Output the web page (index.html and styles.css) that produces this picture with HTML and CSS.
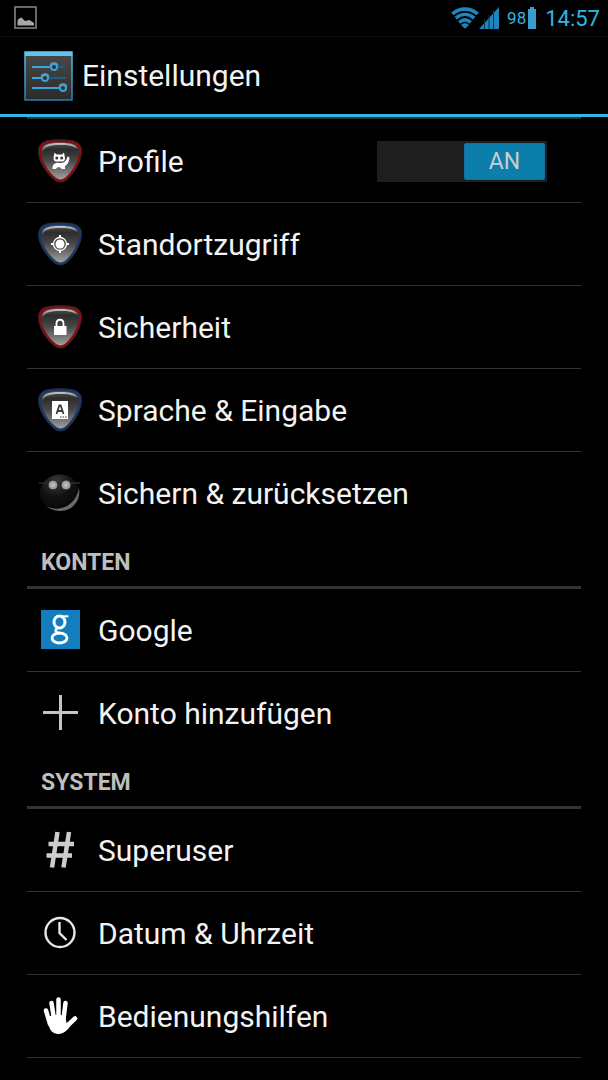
FILE: index.html
```html
<!DOCTYPE html>
<html lang="de">
<head>
  <meta charset="UTF-8" />
  <meta name="viewport" content="width=device-width, initial-scale=1.0"/>
  <title>Einstellungen</title>
  <link rel="stylesheet" href="styles.css">
</head>
<body>
  <!-- shared shapes for the guitar pick icons -->
  <svg class="defs" aria-hidden="true">
    <defs>
      <linearGradient id="pick-fill" x1="0" y1="0" x2="0" y2="1">
        <stop offset="0" stop-color="#555"/>
        <stop offset="0.2" stop-color="#2c2c2c"/>
        <stop offset="0.5" stop-color="#484848"/>
        <stop offset="1" stop-color="#a0a0a0"/>
      </linearGradient>
      <linearGradient id="pick-shine" x1="0" y1="0" x2="0" y2="1">
        <stop offset="0" stop-color="#c8c8c8"/>
        <stop offset="1" stop-color="#c8c8c8" stop-opacity="0"/>
      </linearGradient>
      <radialGradient id="ball-fill" cx="0.4" cy="0.2" r="0.8">
        <stop offset="0" stop-color="#3c3c3c"/>
        <stop offset="0.5" stop-color="#121212"/>
        <stop offset="1" stop-color="#050505"/>
      </radialGradient>
      <radialGradient id="eye-fill">
        <stop offset="0" stop-color="#c8c8c8"/>
        <stop offset="1" stop-color="#888"/>
      </radialGradient>
      <linearGradient id="tile-fill" x1="0" y1="0" x2="0" y2="1">
        <stop offset="0" stop-color="#4a4a4a"/>
        <stop offset="1" stop-color="#2b2b2b"/>
      </linearGradient>
      <linearGradient id="tile-edge" x1="0" y1="0" x2="0" y2="1">
        <stop offset="0" stop-color="#5cc4ee"/>
        <stop offset="1" stop-color="#2a7fae"/>
      </linearGradient>
      <g id="pick">
        <path d="M22 .8C31 .8 37 1.500 40.500 4.500C44 7.500 44 12 43 17C41 26 35.500 34.500 29.500 40C25 44 20 44 15.500 40C9 34.500 3 26 1 17C0 12 .5 7.500 3.500 4.500C7 1.500 13 .8 22 .8Z" fill="currentColor" stroke="#2c2c2c" stroke-width="1"/>
        <path d="M22 3.200C30 3.200 35.500 4 38.500 6.500C41.500 9 41.500 13 40.500 17C38.500 25 33.500 33 28 38C24.500 41.300 20.500 41.300 17 38C11 33 5.500 25 3.500 17C2.500 13 3 9 5.500 6.500C9 4 14 3.200 22 3.200Z" fill="url(#pick-fill)"/>
        <path d="M4 14C3 6 10 4 22 4C33 4 39 6 39.500 10C35 6.500 30 6 22 6C11 6 6 8 4 14Z" fill="url(#pick-shine)"/>
      </g>
    </defs>
  </svg>

  <div class="status-bar">
    <svg class="status-picture" viewBox="0 0 24 24">
      <rect x="1" y="1" width="21" height="21" fill="none" stroke="#8a8a8a" stroke-width="1.500"/>
      <path d="M3.500 19.500V14.500L5 12.500L7.500 11.500L11 15L15.500 14L20 17V19.500Z" fill="#a8a8a8"/>
    </svg>
    <div class="status-right">
      <svg class="wifi" viewBox="0 0 28 22">
        <g fill="none" stroke="#1e86bd" stroke-width="3.600">
          <path d="M1.300 6.800C9 .5 19 .5 26.700 6.800"/>
          <path d="M4.800 11.200C10.500 6.300 17.500 6.300 23.200 11.200"/>
          <path d="M8.300 15.500C12 12 16 12 19.700 15.500"/>
        </g>
        <path d="M14 21.800L10 18C12.500 15.800 15.500 15.800 18 18Z" fill="#1e86bd"/>
      </svg>
      <svg class="signal" viewBox="0 0 20 22">
        <path d="M0 22L20 0V22Z" fill="#1e86bd"/>
        <path d="M5.500 12V22M10 8V22M14.500 3V22" stroke="#063450" stroke-width="1"/>
      </svg>
      <span class="percent">98</span>
      <svg class="battery" viewBox="0 0 8 22">
        <path d="M2 0H6V2H8V22H0V2H2Z" fill="#3a9bd0"/>
      </svg>
      <span class="clock">14:57</span>
    </div>
  </div>

  <header class="title-bar">
    <svg class="app-icon" viewBox="0 0 50 50">
      <rect x="1" y="1" width="47" height="48" fill="url(#tile-fill)" stroke="url(#tile-edge)" stroke-width="1.500"/>
      <rect x="1" y="1" width="47" height="4" fill="#5cc4ee"/>
      <g stroke="#1d5d80" stroke-width="2">
        <path d="M8 16H41M8 27H42M8 37H42"/>
      </g>
      <g stroke="#3aa5dc" stroke-width="2">
        <path d="M8 16H28M8 27H19M8 37H36"/>
      </g>
      <path d="M26.500 14.500C27.500 11.500 32.500 11.500 33.500 14.500M17.500 25.500C18.500 22.500 23.500 22.500 24.500 25.500M35.500 35.500C36.500 32.500 41.500 32.500 42.500 35.500" fill="none" stroke="#999" stroke-width="2"/>
      <g fill="#303030" stroke="#36a3da" stroke-width="2">
        <circle cx="30" cy="16" r="3"/>
        <circle cx="21" cy="27" r="3"/>
        <circle cx="39" cy="37" r="3"/>
      </g>
    </svg>
    <h1>Einstellungen</h1>
  </header>

  <main>
    <ul>
      <li>
        <a href="#profile" id="profile-name">
          <svg class="icon red" viewBox="0 0 44 44">
            <use href="#pick"/>
            <path d="M16.500 13.500L18.500 15.500H24L26 13.500L27 19C27 21.500 26 22.500 24 22.500H18.500C16.500 22.500 15.500 21.500 15.500 19Z" fill="#fff"/>
            <circle cx="18.800" cy="19" r="1.500" fill="#333"/>
            <circle cx="23.700" cy="19" r="1.500" fill="#333"/>
            <path d="M14.500 30C14.500 26 16 23.800 20 23.800C25 24.500 28 23.500 29.500 17.500L31.500 18.500C31 24 29 26 27 27V30H23.500C23 27.500 18.500 27.500 18 30Z" fill="#fff"/>
          </svg>
          Profile
        </a>
        <label class="switch">
          <input type="checkbox" aria-labelledby="profile-name" checked>
          <span>AN</span>
        </label>
      </li>
      <li>
        <a href="#standort">
          <svg class="icon blue" viewBox="0 0 44 44">
            <use href="#pick"/>
            <circle cx="22" cy="22" r="4.500" fill="#fff"/>
            <circle cx="22" cy="22" r="6.500" fill="none" stroke="#fff" stroke-width="1.300"/>
            <path d="M22 13V16M22 28V31M13 22H16M28 22H31" stroke="#fff" stroke-width="2"/>
          </svg>
          Standortzugriff
        </a>
      </li>
      <li>
        <a href="#sicherheit">
          <svg class="icon red" viewBox="0 0 44 44">
            <use href="#pick"/>
            <path d="M18.500 22V18.500C18.500 13.500 25.500 13.500 25.500 18.500V22" fill="none" stroke="#fff" stroke-width="1.800"/>
            <rect x="16" y="21" width="12.500" height="9" fill="#fff"/>
          </svg>
          Sicherheit
        </a>
      </li>
      <li>
        <a href="#sprache">
          <svg class="icon blue" viewBox="0 0 44 44">
            <use href="#pick"/>
            <rect x="14" y="13" width="16" height="18" fill="#fff"/>
            <path d="M18.500 26L21.300 17.500H22.700L25.500 26M19.500 23H24.500" fill="none" stroke="#3c3c3c" stroke-width="1.800"/>
            <path d="M22 29H29" stroke="#3c3c3c" stroke-width="1.200" stroke-dasharray="1.500 1"/>
          </svg>
          Sprache &amp; Eingabe
        </a>
      </li>
      <li>
        <a href="#sichern">
          <svg class="icon" viewBox="0 0 44 44">
            <ellipse cx="22" cy="22" rx="20" ry="18.500" fill="url(#ball-fill)"/>
            <path d="M8 35C21 42 38 35 41 17C44 36 24 47 8 35Z" fill="#6a6a6a"/>
            <path d="M1 12H42" stroke="#2c2c2c" stroke-width="1.500"/>
            <circle cx="15" cy="14" r="5" fill="url(#eye-fill)" stroke="#222"/>
            <circle cx="28" cy="14" r="5" fill="url(#eye-fill)" stroke="#222"/>
          </svg>
          Sichern &amp; zurücksetzen
        </a>
      </li>
    </ul>

    <h2>KONTEN</h2>
    <ul>
      <li>
        <a href="#google">
          <svg class="icon" viewBox="0 0 44 44">
            <rect x="3" y="2" width="39" height="39" fill="#137dbd"/>
            <g fill="none" stroke="#fff">
              <ellipse cx="21.500" cy="14" rx="5.500" ry="6" stroke-width="3"/>
              <path d="M22 8.300H30.500" stroke-width="2"/>
              <path d="M20 20C15.500 22 18 24.500 22 25.500" stroke-width="2.500"/>
              <ellipse cx="21.500" cy="30" rx="7.500" ry="5" stroke-width="2.800"/>
            </g>
          </svg>
          Google
        </a>
      </li>
      <li>
        <a href="#konto">
          <svg class="icon" viewBox="0 0 44 44">
            <path d="M22.500 4V39M5 21.500H40" stroke="#c4c4c4" stroke-width="3"/>
          </svg>
          Konto hinzufügen
        </a>
      </li>
    </ul>

    <h2>SYSTEM</h2>
    <ul>
      <li>
        <a href="#superuser">
          <svg class="icon" viewBox="0 0 44 44">
            <path d="M19.500 4L14 39.500M31 4L25.500 39.500M10.500 16H36M8.500 27.500H34" stroke="#ccc" stroke-width="4.500"/>
          </svg>
          Superuser
        </a>
      </li>
      <li>
        <a href="#datum">
          <svg class="icon" viewBox="0 0 44 44">
            <circle cx="22" cy="21.500" r="14.500" fill="none" stroke="#e8e8e8" stroke-width="2.400"/>
            <path d="M21.500 11V22L28.500 29" fill="none" stroke="#e8e8e8" stroke-width="2.400"/>
          </svg>
          Datum &amp; Uhrzeit
        </a>
      </li>
      <li>
        <a href="#bedienung">
          <svg class="icon" viewBox="0 0 44 44">
            <g fill="none" stroke="#fff" stroke-width="4.500" stroke-linecap="round">
              <path d="M8 16.500L12 30M13.500 9L16 25M20.500 5.500V25M27.500 9L25.500 25M37 24.500L28 33"/>
            </g>
            <path d="M10 23.500C14 20 25 20 27.500 23L28.500 29L34 27C32 35 26 40 20.500 40C15 40 11.500 36.500 10.500 30Z" fill="#fff"/>
          </svg>
          Bedienungshilfen
        </a>
      </li>
    </ul>
  </main>
</body>
</html>
```

FILE: styles.css
```css
* {
  box-sizing: border-box;
}
body {
  margin: 0;
  background-color: #000;
  color: #f3f3f3;
  font-family: Roboto, sans-serif;
}
.defs {
  position: absolute;
  width: 0;
  height: 0;
}

/* status bar */
.status-bar {
  display: flex;
  align-items: center;
  justify-content: space-between;
  height: 37px;
  padding: 0 8px 0 14px;
  border-bottom: 1px solid #0c0c0c;
  color: #33b5e5;
}
.status-picture {
  width: 24px;
  height: 24px;
}
.status-right {
  display: flex;
  align-items: center;
}
.wifi {
  width: 28px;
  height: 22px;
}
.signal {
  width: 20px;
  height: 22px;
}
.percent {
  margin-left: 8px;
  font-size: 17px;
}
.battery {
  width: 8px;
  height: 22px;
  margin: 0 9px 0 2px;
}
.clock {
  font-size: 22px;
}

/* title */
.title-bar {
  display: flex;
  align-items: center;
  gap: 8px;
  height: 80px;
  padding-left: 24px;
  border-bottom: 3px solid #33b5e5;
}
.app-icon {
  width: 50px;
  height: 50px;
}
h1 {
  margin: 0;
  font-size: 30px;
  font-weight: 400;
}

/* list */
main {
  margin: 0 27px;
  padding-top: 1px;
  border-top: 2px solid #333;
}
ul {
  margin: 0;
  padding: 0;
  list-style: none;
}
li {
  display: flex;
  align-items: center;
  height: 83px;
  padding: 0 34px 0 11px;
  border-bottom: 1px solid #333;
}
ul:not(:last-child) li:last-child {
  border-bottom-color: transparent;
}
li a {
  display: flex;
  flex: 1;
  align-items: center;
  gap: 16px;
  color: inherit;
  font-size: 30px;
  text-decoration: none;
}
.icon {
  width: 44px;
  height: 44px;
}
.red {
  color: #8c0a10;
}
.blue {
  color: #17386f;
}
h2 {
  height: 54px;
  margin: 0;
  padding: 0 14px;
  border-bottom: 3px solid #333;
  color: #bebebe;
  font-size: 23px;
  font-weight: 700;
  line-height: 56px;
}

/* on/off switch */
.switch {
  display: flex;
  width: 170px;
  height: 41px;
  padding: 2px;
  background-color: #1e1e1e;
  cursor: pointer;
}
.switch input {
  position: absolute;
  margin: 0;
  opacity: 0;
}
.switch span {
  width: 81px;
  border: 1px solid #1c6ca4;
  border-radius: 2px;
  background-color: #444;
  color: #ccc;
  font-size: 23px;
  line-height: 36px;
  text-align: center;
}
.switch input:checked + span {
  margin-left: auto;
  background-color: #0c7eac;
}
```
